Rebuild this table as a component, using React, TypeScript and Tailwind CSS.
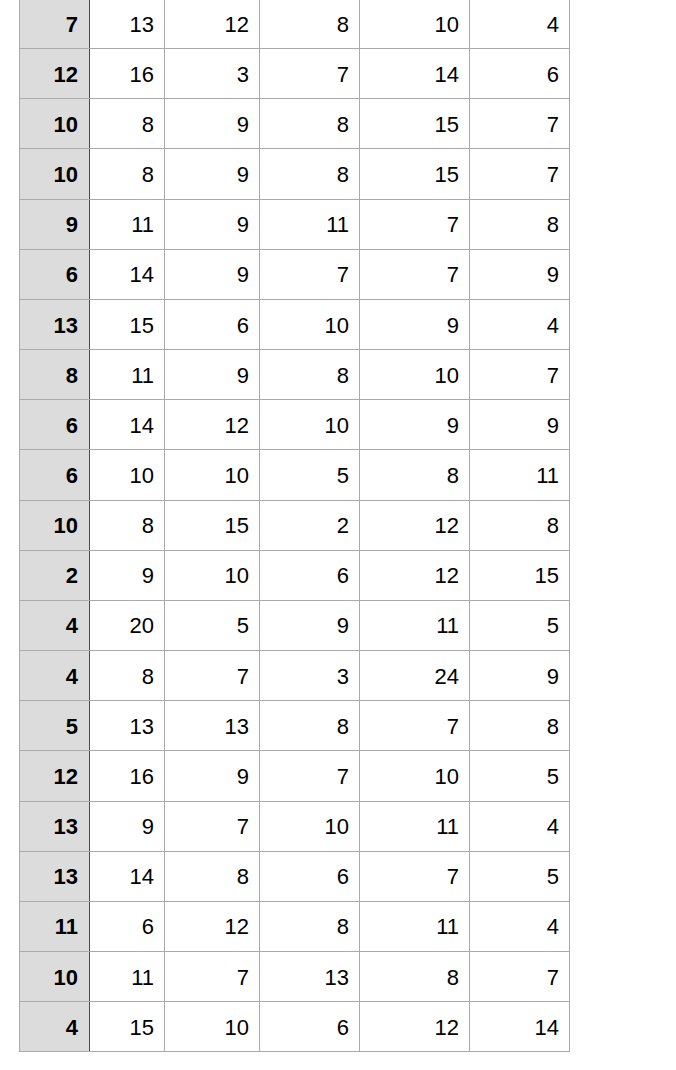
import React from "react";

const rows: number[][] = [
  [7, 13, 12, 8, 10, 4],
  [12, 16, 3, 7, 14, 6],
  [10, 8, 9, 8, 15, 7],
  [10, 8, 9, 8, 15, 7],
  [9, 11, 9, 11, 7, 8],
  [6, 14, 9, 7, 7, 9],
  [13, 15, 6, 10, 9, 4],
  [8, 11, 9, 8, 10, 7],
  [6, 14, 12, 10, 9, 9],
  [6, 10, 10, 5, 8, 11],
  [10, 8, 15, 2, 12, 8],
  [2, 9, 10, 6, 12, 15],
  [4, 20, 5, 9, 11, 5],
  [4, 8, 7, 3, 24, 9],
  [5, 13, 13, 8, 7, 8],
  [12, 16, 9, 7, 10, 5],
  [13, 9, 7, 10, 11, 4],
  [13, 14, 8, 6, 7, 5],
  [11, 6, 12, 8, 11, 4],
  [10, 11, 7, 13, 8, 7],
  [4, 15, 10, 6, 12, 14],
];

const widths = ["w-[75px]", "w-[95px]", "w-[100px]", "w-[110px]", "w-[100px]"];

export default function App() {
  return (
    <div className="min-h-[1070px] bg-white" style={{ fontFamily: '"Liberation Sans", Arial, Helvetica, sans-serif' }}>
      <div className="ml-[19px] mt-[-2px] w-[551px] border-l border-t border-[#aaaaaa] text-[22px] text-black">
        {rows.map((r, i) => (
          <div key={i} className="flex h-[50.17px] border-b border-[#aaaaaa]">
            <div className="flex w-[70px] items-center justify-end border-r border-r-[#4a4a4a] bg-[#dcdcdc] pt-[1px] pr-[11px] font-bold">
              {r[0]}
            </div>
            {r.slice(1).map((v, j) => (
              <div
                key={j}
                className={`flex ${widths[j]} items-center justify-end border-r border-[#aaaaaa] pt-[1px] pr-[10px]`}
              >
                {v}
              </div>
            ))}
          </div>
        ))}
      </div>
    </div>
  );
}
